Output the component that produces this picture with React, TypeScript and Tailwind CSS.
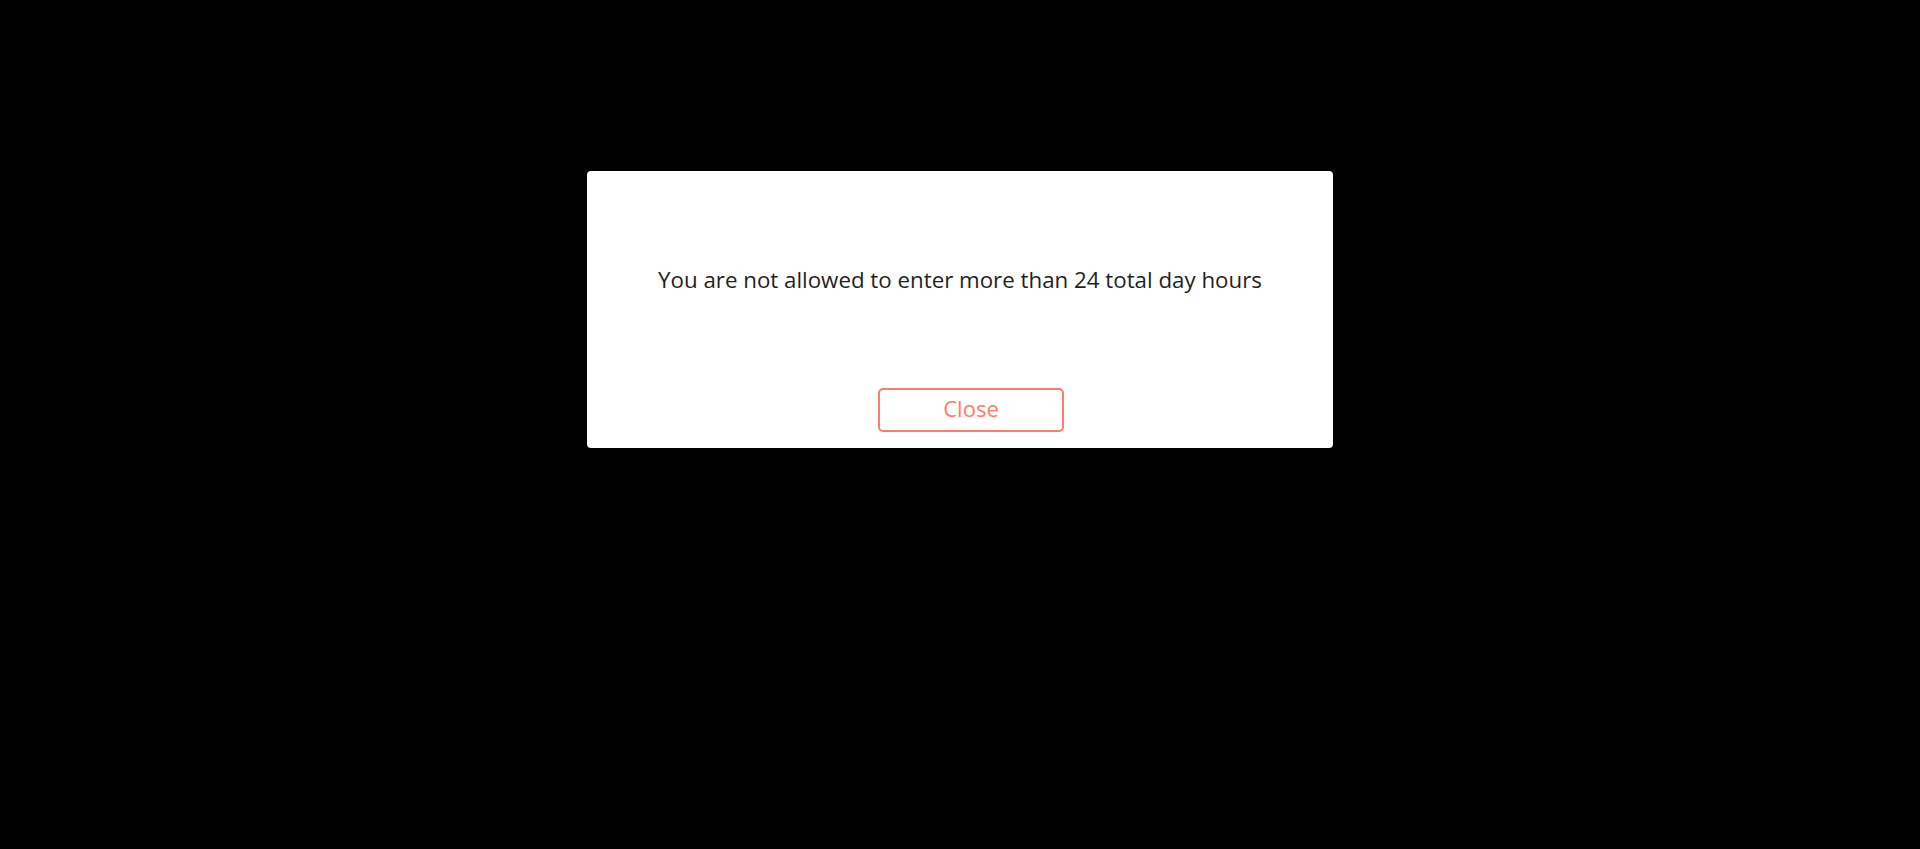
export default function App() {
  return (
    <div className="flex h-[849px] w-full justify-center bg-black pt-[171px] font-['Open_Sans',sans-serif]">
      <div className="flex h-[277px] w-[746px] flex-col items-center rounded bg-white px-6 pb-4">
        <p className="mt-[95px] text-[22.3px] leading-7 text-[#1f1f1f]">
          You are not allowed to enter more than 24 total day hours
        </p>
        <button className="mt-auto ml-[22px] h-[44px] w-[186px] rounded-[5px] border-2 border-[#ff7b6b] pb-[4px] text-[22px] text-[#ff7b6b]">
          Close
        </button>
      </div>
    </div>
  );
}
